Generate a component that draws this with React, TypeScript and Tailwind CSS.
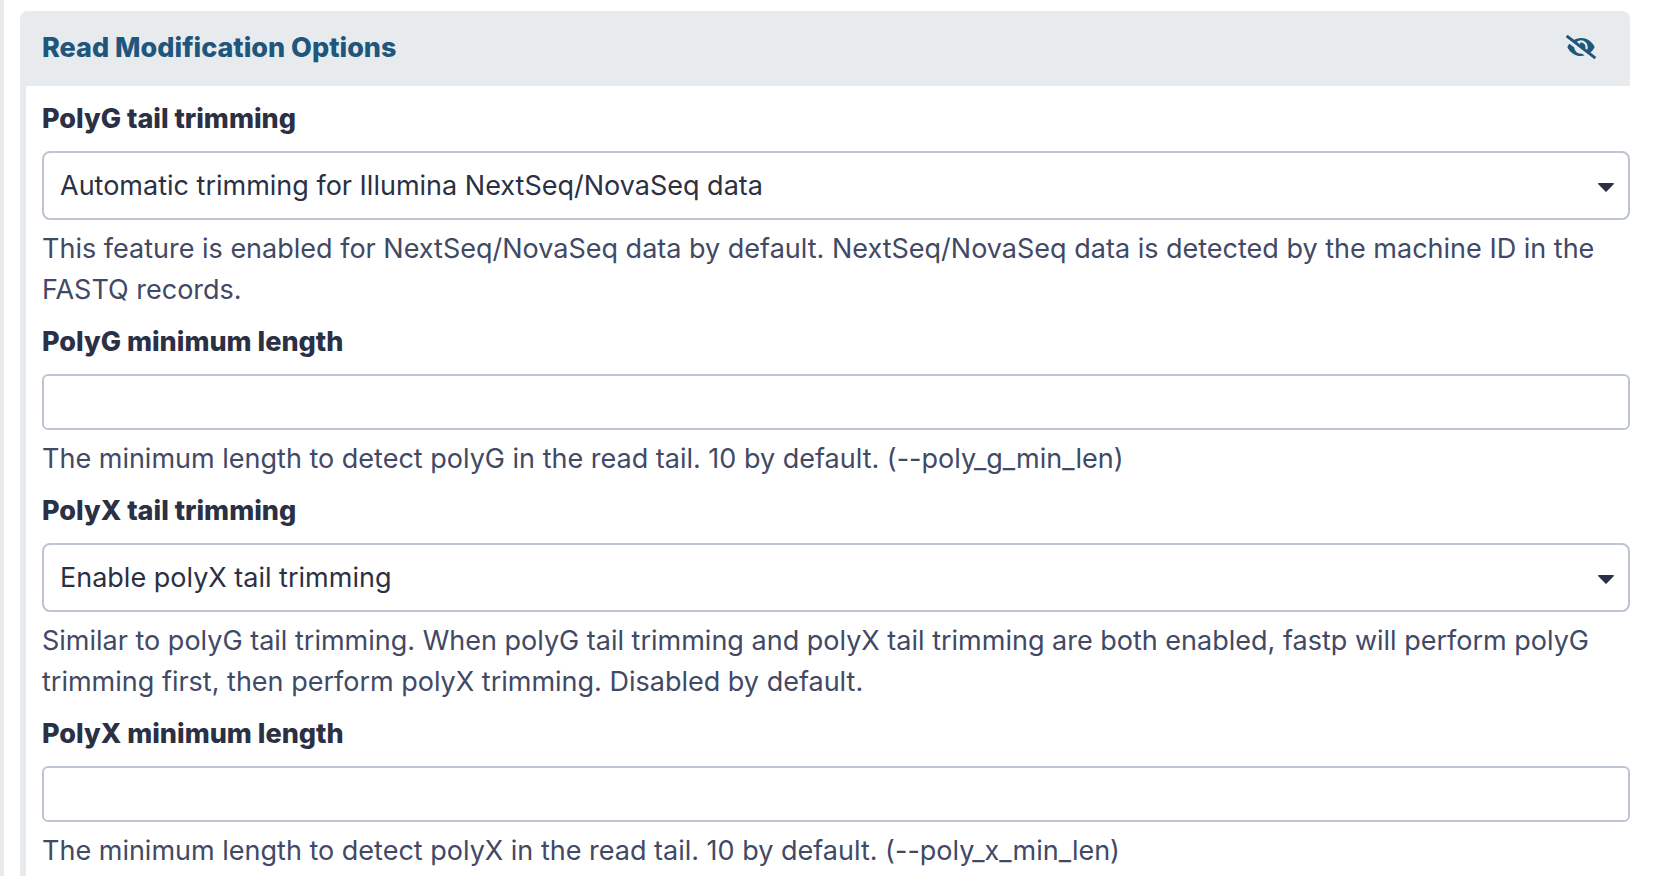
import type { ReactNode } from 'react';
import { FaEyeSlash } from 'react-icons/fa';

function Field({ id, label, help, children }: { id: string; label: string; help: string; children: ReactNode }) {
  return (
    <div className="mb-[11px]">
      <label htmlFor={id} className="mb-3 block font-extrabold text-[#2b3044]">{label}</label>
      {children}
      <p className="mt-2 text-[#414965]">{help}</p>
    </div>
  );
}

function SelectBox({ id, options }: { id: string; options: string[] }) {
  return (
    <div className="relative">
      <select id={id} className="block h-[69px] w-full appearance-none rounded-lg border-2 border-[#bcc5d1] bg-white px-4 text-[#2b3044]">
        {options.map((o) => <option key={o}>{o}</option>)}
      </select>
      <svg viewBox="0 0 16 9" className="pointer-events-none absolute top-8 right-4 h-[9px] w-4 fill-[#2b3044]" aria-hidden="true">
        <path d="M.8 0h14.4c.7 0 1 .8.5 1.3L8.6 8.6a.9.9 0 0 1-1.2 0L.3 1.3C-.2.8.1 0 .8 0Z" />
      </svg>
    </div>
  );
}

function TextBox({ id }: { id: string }) {
  return <input id={id} type="text" className="block h-14 w-full rounded-md border-2 border-[#bcc5d1] bg-white px-4 text-[#2b3044]" />;
}

export default function App() {
  return (
    <main className="h-screen overflow-hidden border-l-4 border-[#e8ebee] bg-white pt-[11px] pr-[30px] pl-4 font-['Inter',sans-serif] text-[27px] leading-[41px]">
      <section className="rounded-t-lg border-l-[6px] border-[#e8ebee] pb-4">
        <header className="-ml-[6px] flex h-[75px] items-center justify-between rounded-t-lg bg-[#e8ebee] pr-[34px] pb-[3px] pl-[22px] text-[#1f567c]">
          <h2 className="font-extrabold">Read Modification Options</h2>
          <button type="button" aria-label="Toggle section"><FaEyeSlash className="size-[30px]" /></button>
        </header>
        <div className="pt-3 pl-4">
          <Field id="polyg" label="PolyG tail trimming" help="This feature is enabled for NextSeq/NovaSeq data by default. NextSeq/NovaSeq data is detected by the machine ID in the FASTQ records.">
            <SelectBox id="polyg" options={['Automatic trimming for Illumina NextSeq/NovaSeq data']} />
          </Field>
          <Field id="polyg-min" label="PolyG minimum length" help="The minimum length to detect polyG in the read tail. 10 by default. (--poly_g_min_len)">
            <TextBox id="polyg-min" />
          </Field>
          <Field id="polyx" label="PolyX tail trimming" help="Similar to polyG tail trimming. When polyG tail trimming and polyX tail trimming are both enabled, fastp will perform polyG trimming first, then perform polyX trimming. Disabled by default.">
            <SelectBox id="polyx" options={['Enable polyX tail trimming']} />
          </Field>
          <Field id="polyx-min" label="PolyX minimum length" help="The minimum length to detect polyX in the read tail. 10 by default. (--poly_x_min_len)">
            <TextBox id="polyx-min" />
          </Field>
        </div>
      </section>
    </main>
  );
}
